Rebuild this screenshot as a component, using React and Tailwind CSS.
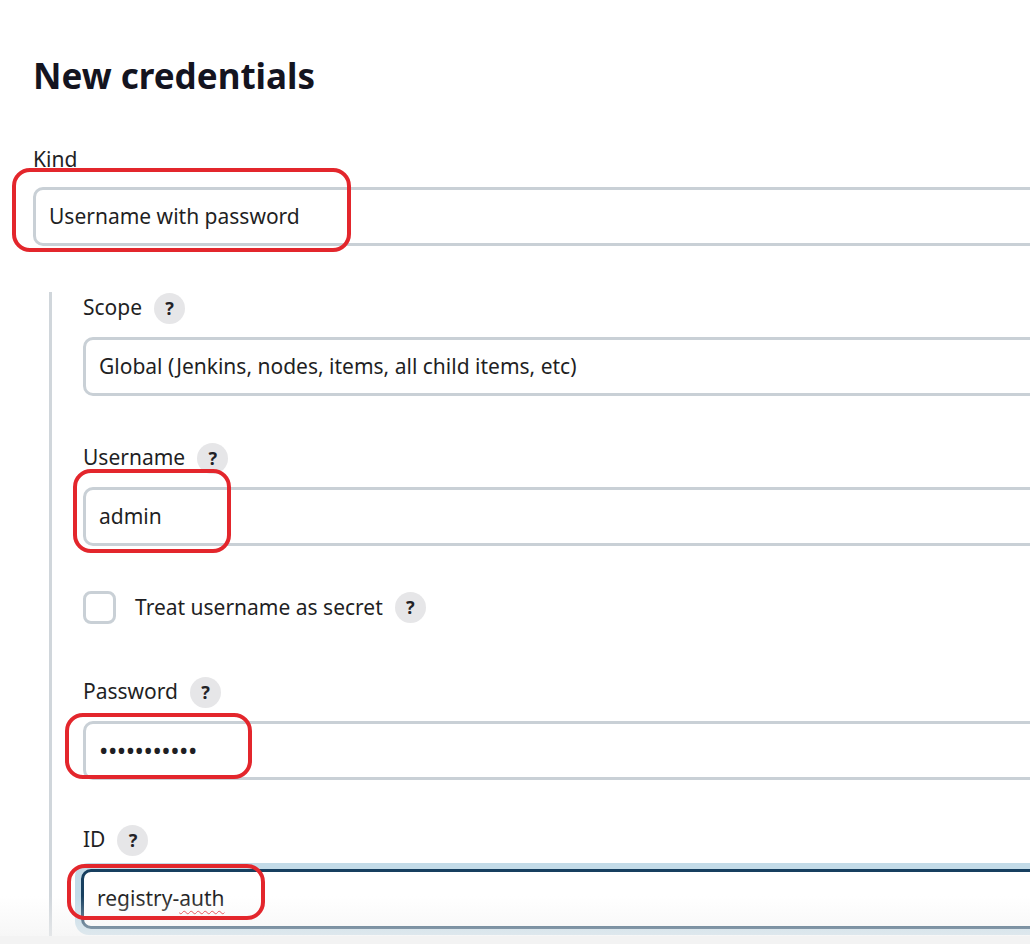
import React from "react";

function Help() {
  return (
    <span className="ml-[12px] inline-flex h-[31px] w-[31px] items-center justify-center rounded-full bg-[#e6e6e8] text-[18px] font-bold text-[#222226]">
      ?
    </span>
  );
}

function Label({ children, help = true }) {
  return (
    <div className="flex h-[32px] items-center text-[21px] text-[#1f1f24]">
      <span>{children}</span>
      {help && <Help />}
    </div>
  );
}

function Field({ children, focus = false }) {
  if (focus) {
    return (
      <div className="ml-[-8px] w-[1100px] rounded-[14px] bg-[#c3dbe8] p-[6px]">
        <div className="flex h-[60px] items-center rounded-[10px] border-[3px] border-[#173f5f] bg-white pl-[13px] text-[21px] text-[#1f1f24]">
          {children}
        </div>
      </div>
    );
  }
  return (
    <div className="flex h-[59px] w-[1100px] items-center rounded-[10px] border-[3px] border-[#c9d0d6] bg-white pl-[13px] text-[21px] text-[#1f1f24]">
      {children}
    </div>
  );
}

function RedBox({ className }) {
  return (
    <div
      className={
        "pointer-events-none absolute rounded-[18px] border-[4px] border-[#e3262c] " +
        className
      }
    />
  );
}

export default function App() {
  return (
    <div className="relative h-[944px] w-[1030px] overflow-hidden bg-white font-['Noto_Sans',sans-serif]">
      <div className="pl-[33px] pt-[50px]">
        <h1 className="text-[35px] font-bold leading-[52px] text-[#14141f]">
          New credentials
        </h1>
        <div className="mt-[43px] flex h-[30px] items-center text-[21px] text-[#1f1f24]">
          Kind
        </div>
        <div className="mt-[12px]">
          <Field>Username with password</Field>
        </div>

        <div className="ml-[16px] mt-[46px] border-l-[3px] border-[#d0d6db] pl-[31px] pb-[20px]">
          <Label>Scope</Label>
          <div className="mt-[13px]">
            <Field>Global (Jenkins, nodes, items, all child items, etc)</Field>
          </div>

          <div className="mt-[46px]">
            <Label>Username</Label>
          </div>
          <div className="mt-[13px]">
            <Field>admin</Field>
          </div>

          <div className="mt-[45px] flex h-[33px] items-center">
            <span className="h-[33px] w-[33px] rounded-[8px] border-[3px] border-[#c9d0d6] bg-white" />
            <span className="ml-[19px] text-[21px] text-[#1f1f24]">
              Treat username as secret
            </span>
            <Help />
          </div>

          <div className="mt-[52px]">
            <Label>Password</Label>
          </div>
          <div className="mt-[13px]">
            <Field>
              <span className="text-[25px] tracking-[-0.5px] text-[#1f1f24]">
                •••••••••••
              </span>
            </Field>
          </div>

          <div className="mt-[44px]">
            <Label>ID</Label>
          </div>
          <div className="mt-[7px]">
            <Field focus>
              <span>
                registry-
                <span className="underline decoration-wavy decoration-[#e3262c] decoration-1 underline-offset-4">
                  auth
                </span>
              </span>
            </Field>
          </div>
        </div>
      </div>

      <div className="pointer-events-none absolute bottom-[8px] left-0 h-[40px] w-full bg-gradient-to-b from-transparent to-[#f1f1f1]/60" />
      <div className="absolute bottom-0 left-0 h-[8px] w-full bg-[#f3f3f3]" />

      <RedBox className="left-[12px] top-[168px] h-[84px] w-[339px]" />
      <RedBox className="left-[73px] top-[469px] h-[84px] w-[158px]" />
      <RedBox className="left-[65px] top-[713px] h-[66px] w-[187px]" />
      <RedBox className="left-[67px] top-[864px] h-[56px] w-[198px]" />
    </div>
  );
}
